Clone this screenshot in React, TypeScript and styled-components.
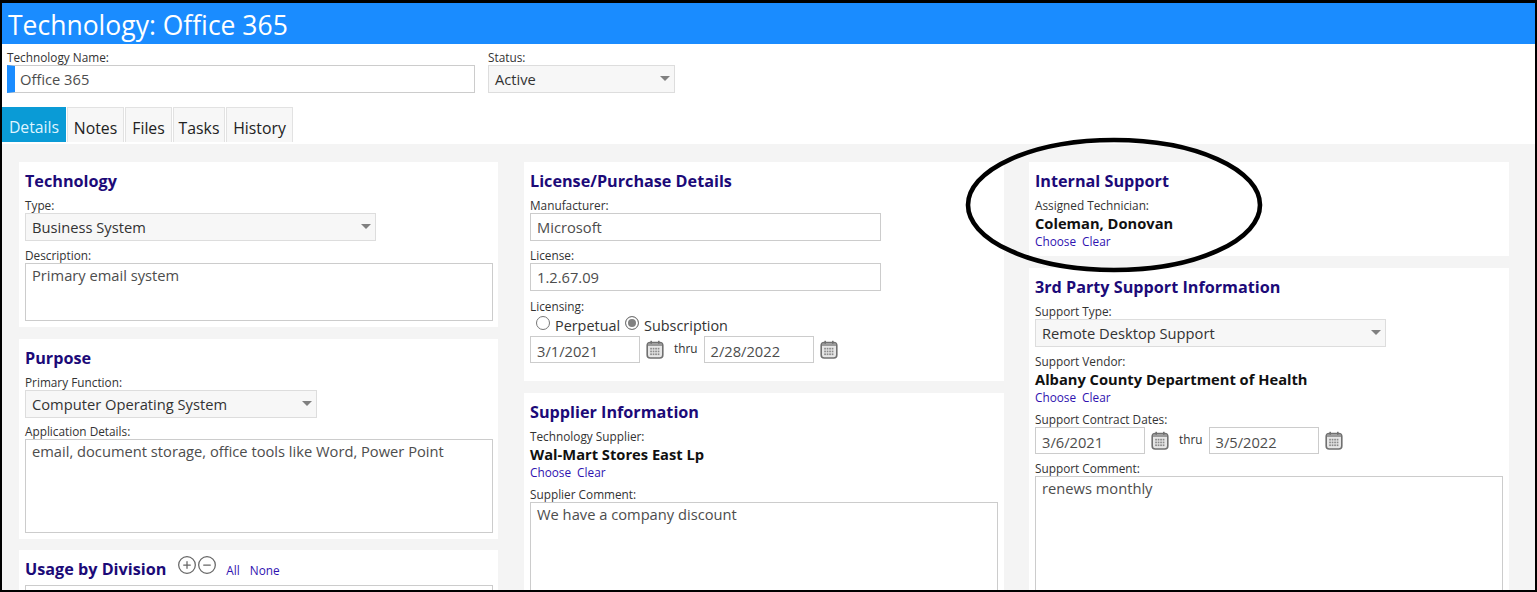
import styled, { createGlobalStyle } from 'styled-components'
import { CirclePlus, CircleMinus } from 'lucide-react'

const Global = createGlobalStyle`
  html, body {
    margin: 0;
    padding: 0;
    background: #fff;
    overflow: hidden;
  }
  * {
    box-sizing: border-box;
  }
`

const Frame = styled.div`
  position: relative;
  width: 1537px;
  height: 592px;
  border: 2px solid #000;
  border-top-width: 3px;
  overflow: hidden;
  background: #fff;
  color: #333;
  font-family: "Open Sans", "Noto Sans", "Liberation Sans", sans-serif;
`

const Header = styled.div`
  height: 41px;
  background: #1a8cff;
  color: #fff;
  font-size: 26.5px;
  line-height: 44px;
  padding-left: 6px;
  white-space: nowrap;
`

const Label = styled.div<{ $top?: number }>`
  margin-top: ${p => p.$top ?? 7}px;
  font-size: 11.8px;
  line-height: 15px;
  color: #333;
  white-space: nowrap;
`

const TopForm = styled.div`
  display: flex;
  gap: 13px;
  height: 63px;
  padding-left: 5px;
`

const Field = styled.div<{ $width: number }>`
  width: ${p => p.$width}px;
`

const Input = styled.div<{ $width?: number; $marked?: boolean }>`
  width: ${p => (p.$width ? `${p.$width}px` : '100%')};
  height: 28px;
  border: 1px solid #ccc;
  background: #fff;
  font-size: 14.7px;
  line-height: 27px;
  padding-left: 6px;
  color: #4d4d4d;
  white-space: nowrap;
  ${p => p.$marked && 'border-left: 8px solid #1a8cff; padding-left: 5px;'}
`

const DateInput = styled(Input)`
  height: 27px;
  line-height: 28px;
`

const Select = styled.div<{ $width: number }>`
  position: relative;
  width: ${p => p.$width}px;
  height: 28px;
  border: 1px solid #ddd;
  background: #f7f7f7;
  font-size: 14.7px;
  line-height: 27px;
  padding-left: 6px;
  color: #333;
  white-space: nowrap;

  &::after {
    content: '';
    position: absolute;
    right: 4px;
    top: 10px;
    border-left: 5px solid transparent;
    border-right: 5px solid transparent;
    border-top: 5px solid #808080;
  }
`

const TextArea = styled.div<{ $height: number }>`
  width: 468px;
  height: ${p => p.$height}px;
  border: 1px solid #ccc;
  background: #fff;
  font-size: 14.7px;
  line-height: 22px;
  padding: 0 6px;
  color: #4d4d4d;
`

const Tabs = styled.div`
  display: flex;
  height: 37px;
  gap: 1px;
`

const Tab = styled.div<{ $active?: boolean; $width: number }>`
  width: ${p => p.$width}px;
  height: 35px;
  text-align: center;
  font-size: 15.8px;
  line-height: 41px;
  background: ${p => (p.$active ? '#0a9bd6' : '#f7f7f7')};
  color: ${p => (p.$active ? '#dff4ff' : '#222')};
  border: ${p => (p.$active ? '0' : '1px solid #e2e2e2')};
  border-bottom: 0;
`

const Content = styled.div`
  display: grid;
  grid-template-columns: 505px 505px 480px;
  height: 460px;
  padding: 18px 0 0 17px;
  background: #f4f4f4;
`

const Column = styled.div<{ $width: number }>`
  display: flex;
  flex-direction: column;
  gap: 12px;
  width: ${p => p.$width}px;
`

const Card = styled.div<{ $height?: number; $after?: number }>`
  background: #fff;
  padding: 6px 6px 0;
  ${p => p.$height && `height: ${p.$height}px;`}
  ${p => p.$after && `margin-bottom: ${p.$after}px;`}
  flex-shrink: 0;
`

const Title = styled.div`
  display: flex;
  align-items: center;
  height: 23px;
  padding-top: 3px;
  font-size: 16.2px;
  font-weight: 700;
  color: #1c0a78;
  white-space: nowrap;
`

const Name = styled.div`
  font-size: 14.7px;
  font-weight: 700;
  line-height: 20px;
  color: #111;
  white-space: nowrap;
`

const Links = styled.div`
  display: flex;
  gap: 6px;
  font-size: 11.8px;
  line-height: 16px;
  color: #2f12b0;
`

const Radios = styled.div`
  display: flex;
  align-items: center;
  height: 22px;
  padding-left: 6px;
  font-size: 14.4px;
  color: #333;
`

const Radio = styled.span<{ $on?: boolean }>`
  width: 14px;
  height: 14px;
  border-radius: 50%;
  border: 1px solid #777;
  margin-right: 5px;
  background: ${p => (p.$on ? '#808080' : '#fff')};
  box-shadow: ${p => (p.$on ? 'inset 0 0 0 2px #fff' : 'none')};
  position: relative;
  top: -2px;
`

const RadioLabel = styled.span`
  margin-right: 5px;
`

const DateRow = styled.div`
  display: flex;
  align-items: center;
`

const Thru = styled.span`
  font-size: 11.8px;
  margin: 0 6px 4px 10px;
  color: #333;
`

const CalendarIcon = styled.svg`
  width: 18px;
  height: 19px;
  margin-left: 6px;
`

const TitleIcons = styled.span`
  display: inline-flex;
  margin: 0 9px 0 11px;
  position: relative;
  top: -4px;
  color: #666;
`

const TitleLinks = styled(Links)`
  font-weight: 400;
  position: relative;
  top: 1px;
  gap: 10px;
`

const DivisionList = styled(TextArea)`
  margin-top: 6px;
`

const Ellipse = styled.svg`
  position: absolute;
  left: 962px;
  top: 132px;
  width: 300px;
  height: 140px;
  pointer-events: none;
`

const Calendar = () => (
  <CalendarIcon viewBox="0 0 18 19">
    <rect x="1.2" y="2.6" width="15.6" height="15.4" rx="3" fill="#e6e6e6" stroke="#707070" strokeWidth="1.6" />
    <rect x="2" y="3.4" width="14" height="2.6" fill="#9a9a9a" />
    <rect x="4.4" y="0.8" width="1.6" height="3" fill="#707070" />
    <rect x="12" y="0.8" width="1.6" height="3" fill="#707070" />
    {[0, 1, 2, 3].map(c =>
      [0, 1, 2].map(r => (
        <rect key={`${c}-${r}`} x={4.2 + c * 2.5} y={7.8 + r * 2.8} width="1.7" height="1.7" fill="#8a8a8a" />
      ))
    )}
  </CalendarIcon>
)

const Choose = () => (
  <Links>
    <span>Choose</span>
    <span>Clear</span>
  </Links>
)

export default function App() {
  return (
    <Frame>
      <Global />
      <Header>Technology: Office 365</Header>
      <TopForm>
        <Field $width={468}>
          <Label $top={6}>Technology Name:</Label>
          <Input $marked>Office 365</Input>
        </Field>
        <Field $width={187}>
          <Label $top={6}>Status:</Label>
          <Select $width={187}>Active</Select>
        </Field>
      </TopForm>
      <Tabs>
        <Tab $active $width={64}>Details</Tab>
        <Tab $width={57}>Notes</Tab>
        <Tab $width={47}>Files</Tab>
        <Tab $width={52}>Tasks</Tab>
        <Tab $width={67}>History</Tab>
      </Tabs>
      <Content>
        <Column $width={479}>
          <Card $height={165}>
            <Title>Technology</Title>
            <Label>Type:</Label>
            <Select $width={351}>Business System</Select>
            <Label>Description:</Label>
            <TextArea $height={58}>Primary email system</TextArea>
          </Card>
          <Card $height={200} $after={-1}>
            <Title>Purpose</Title>
            <Label>Primary Function:</Label>
            <Select $width={292}>Computer Operating System</Select>
            <Label $top={6}>Application Details:</Label>
            <TextArea $height={94}>email, document storage, office tools like Word, Power Point</TextArea>
          </Card>
          <Card $height={120}>
            <Title>
              Usage by Division
              <TitleIcons>
                <CirclePlus size={20} strokeWidth={1.5} />
                <CircleMinus size={20} strokeWidth={1.5} />
              </TitleIcons>
              <TitleLinks>
                <span>All</span>
                <span>None</span>
              </TitleLinks>
            </Title>
            <DivisionList $height={60} />
          </Card>
        </Column>
        <Column $width={480}>
          <Card $height={219}>
            <Title>License/Purchase Details</Title>
            <Label>Manufacturer:</Label>
            <Input $width={351}>Microsoft</Input>
            <Label>License:</Label>
            <Input $width={351}>1.2.67.09</Input>
            <Label $top={8}>Licensing:</Label>
            <Radios>
              <Radio />
              <RadioLabel>Perpetual</RadioLabel>
              <Radio $on />
              <RadioLabel>Subscription</RadioLabel>
            </Radios>
            <DateRow>
              <DateInput $width={110}>3/1/2021</DateInput>
              <Calendar />
              <Thru>thru</Thru>
              <DateInput $width={110}>2/28/2022</DateInput>
              <Calendar />
            </DateRow>
          </Card>
          <Card>
            <Title>Supplier Information</Title>
            <Label>Technology Supplier:</Label>
            <Name>Wal-Mart Stores East Lp</Name>
            <Choose />
            <Label>Supplier Comment:</Label>
            <TextArea $height={120}>We have a company discount</TextArea>
          </Card>
        </Column>
        <Column $width={480}>
          <Card $height={94}>
            <Title>Internal Support</Title>
            <Label>Assigned Technician:</Label>
            <Name>Coleman, Donovan</Name>
            <Choose />
          </Card>
          <Card>
            <Title>3rd Party Support Information</Title>
            <Label>Support Type:</Label>
            <Select $width={351}>Remote Desktop Support</Select>
            <Label>Support Vendor:</Label>
            <Name>Albany County Department of Health</Name>
            <Choose />
            <Label>Support Contract Dates:</Label>
            <DateRow>
              <DateInput $width={110}>3/6/2021</DateInput>
              <Calendar />
              <Thru>thru</Thru>
              <DateInput $width={110}>3/5/2022</DateInput>
              <Calendar />
            </DateRow>
            <Label>Support Comment:</Label>
            <TextArea $height={130}>renews monthly</TextArea>
          </Card>
        </Column>
      </Content>
      <Ellipse viewBox="0 0 300 140">
        <ellipse cx="150" cy="70" rx="146" ry="65" fill="none" stroke="#000" strokeWidth="4.6" />
      </Ellipse>
    </Frame>
  )
}
